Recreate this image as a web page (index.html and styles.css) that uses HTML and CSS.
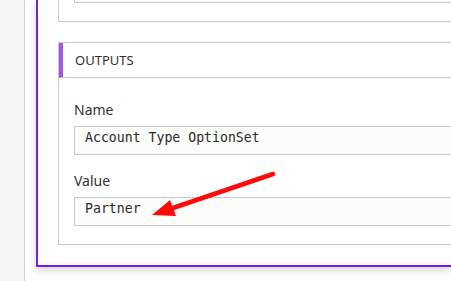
FILE: index.html
```html
<!DOCTYPE html>
<html lang="en">
<head>
  <meta charset="UTF-8">
  <meta name="viewport" content="width=device-width, initial-scale=1.0">
  <title>Outputs</title>
  <link rel="stylesheet" href="styles.css">
</head>
<body>
  <div class="sidebar"></div>

  <div class="main">
    <div class="card">
      <div class="panel panel-top">
        <div class="stub"></div>
      </div>

      <div class="panel">
        <div class="panel-header">OUTPUTS</div>
        <div class="panel-body">
          <div class="field-label">Name</div>
          <div class="field-value">Account Type OptionSet</div>

          <div class="field-label field-gap">Value</div>
          <div class="field-value">Partner</div>
        </div>
      </div>

      <!-- red annotation arrow -->
      <svg class="arrow" width="451" height="281" viewBox="0 0 451 281">
        <line x1="273" y1="174" x2="170" y2="209" stroke="#ff0a0a" stroke-width="4.5" stroke-linecap="round"/>
        <polygon points="152,215 170,200 176,216" fill="#ff0a0a"/>
      </svg>
    </div>
  </div>
</body>
</html>
```

FILE: styles.css
```css
body {
  margin: 0;
  height: 281px;
  display: flex;
  overflow: hidden;
  background-color: #ffffff;
  font-family: "Noto Sans", "Open Sans", sans-serif;
  color: #323130;
}

.sidebar {
  width: 24px;
  flex-shrink: 0;
  background-color: #f7f7f7;
  border-right: 1px solid #d2d2d2;
}

.main {
  flex: 1;
  min-width: 0;
  padding-left: 11px;
}

/* card runs on past the right edge, so no right border */
.card {
  border-left: 2px solid #7a1bd8;
  border-bottom: 2px solid #7a1bd8;
  padding: 0 0 20px 20px;
  background-color: #ffffff;
  box-shadow: 0 3px 8px rgba(0, 0, 0, 0.18);
}

.panel {
  border: 1px solid #c8c8c8;
  border-right: none;
  margin-top: 20px;
}

.panel-top {
  border-top: none;
  margin-top: 0;
  padding: 0 0 18px 15px;
}

.stub {
  height: 2px;
  border-left: 1px solid #c8c8c8;
  border-bottom: 1px solid #c8c8c8;
}

.panel-header {
  height: 34px;
  line-height: 34px;
  border-left: 4px solid #a259e6;
  border-bottom: 1px solid #c8c8c8;
  padding-left: 12px;
  font-size: 13px;
}

.panel-body {
  padding: 22px 0 18px 15px;
}

.field-label {
  font-size: 14px;
  line-height: 20px;
  margin-bottom: 6px;
}

.field-gap {
  margin-top: 16px;
}

.field-value {
  border: 1px solid #c8c8c8;
  border-right: none;
  background-color: #fcfcfa;
  padding: 3px 10px 9px 10px;
  font-family: "DejaVu Sans Mono", "Liberation Mono", monospace;
  font-size: 13.2px;
  line-height: 15px;
  color: #2a2a2a;
}

.arrow {
  position: absolute;
  top: 0;
  left: 0;
  pointer-events: none;
}
```
